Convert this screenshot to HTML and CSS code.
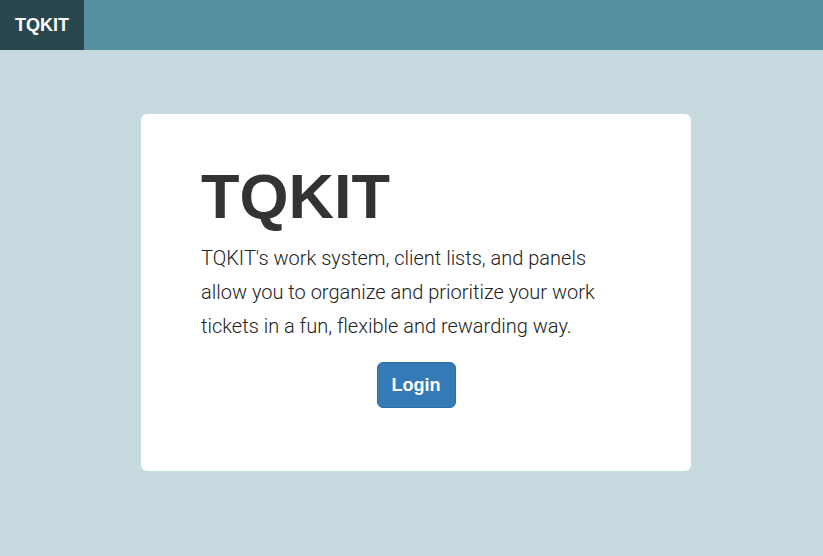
FILE: index.html
```html
<!DOCTYPE html>
<html>
<head>
<meta charset="utf-8">
<link rel="stylesheet" href="styles.css">
</head>
<body>
<nav class="navbar">
  <a class="brand">TQKIT</a>
</nav>
<main class="page">
  <section class="jumbo">
    <h1 class="title">TQKIT</h1>
    <p class="lead">TQKIT's work system, client lists, and panels allow you to organize and prioritize your work tickets in a fun, flexible and rewarding way.</p>
    <div class="actions"><button class="btn">Login</button></div>
  </section>
</main>
</body>
</html>
```
FILE: styles.css
```css
* { box-sizing: border-box; }
html, body { margin: 0; height: 100%; }
body {
  background: #c6dadf;
  font-family: "Liberation Sans", Arial, sans-serif;
  color: #333;
}
.navbar {
  height: 50px;
  background: #55909f;
  display: flex;
}
.brand {
  background: #2b474e;
  color: #fff;
  font-weight: bold;
  font-size: 18px;
  padding: 0 15px;
  display: flex;
  align-items: center;
  width: 84px;
}
.page {
  padding: 64px 0 0 141px;
}
.jumbo {
  width: 550px;
  height: 357px;
  background: #fff;
  border-radius: 6px;
  padding: 48px 60px;
}
.title {
  margin: 0;
  font-size: 63px;
  line-height: 69px;
  font-weight: bold;
  color: #333;
}
.lead {
  margin: 10px 0 19px;
  font-family: Roboto, "Liberation Sans", sans-serif;
  font-size: 20px;
  line-height: 34px;
  font-weight: 300;
  color: #222;
}
.actions {
  display: flex;
  justify-content: center;
}
.btn {
  width: 79px;
  height: 46px;
  background: #337ab7;
  border: 1px solid #2e6da4;
  border-radius: 6px;
  color: #fff;
  font-family: "Liberation Sans", Arial, sans-serif;
  font-weight: bold;
  font-size: 18px;
  padding: 0;
}
```
